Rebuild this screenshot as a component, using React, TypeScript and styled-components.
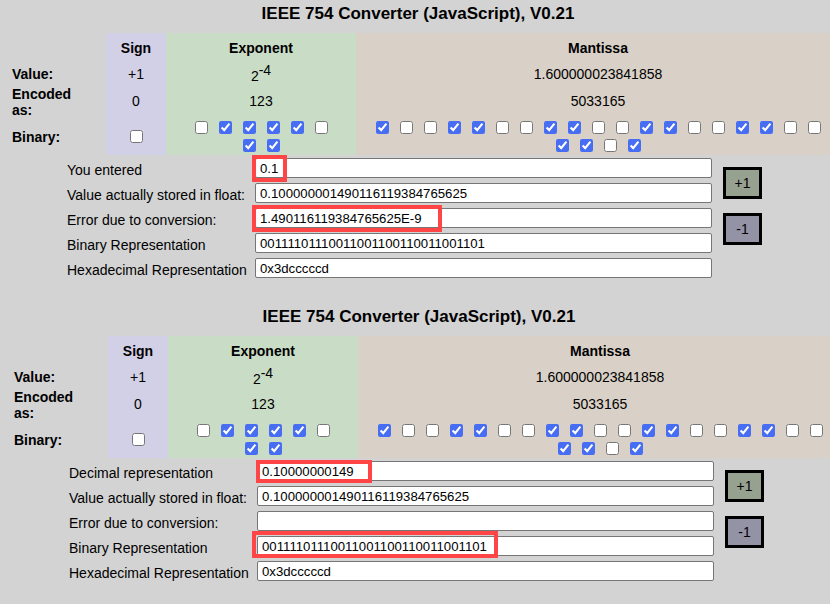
import React from "react";
import styled, { createGlobalStyle } from "styled-components";

const Global = createGlobalStyle`
  html, body { margin: 0; padding: 0; background: #d3d3d3; overflow: hidden; }
  body { font-family: "Liberation Sans", Arial, sans-serif; font-size: 14px; color: #000; }
`;

const Page = styled.div`
  width: 830px;
  height: 604px;
  overflow: hidden;
  display: flex;
  flex-direction: column;
`;

const Panel = styled.section<{ $shift: number }>`
  flex: none;
  width: 836px;
  height: 303px;
  box-sizing: border-box;
  padding-left: ${(p) => p.$shift}px;
`;

const Title = styled.h2`
  margin: 0;
  height: 33px;
  line-height: 27px;
  text-align: center;
  font-size: 17px;
  font-weight: bold;
`;

const BitTable = styled.div`
  display: grid;
  grid-template-columns: 94px 60px 190px 484px;
  grid-template-rows: 29px 23px 32px 38px;
  margin-left: 12px;
`;

const tones: Record<string, string> = {
  none: "transparent",
  sign: "#d2d0e6",
  exp: "#c9dcc6",
  man: "#d9d1c7",
};

const Cell = styled.div<{ $tone: string; $bold?: boolean }>`
  display: flex;
  align-items: center;
  justify-content: center;
  text-align: center;
  background: ${(p) => tones[p.$tone]};
  font-weight: ${(p) => (p.$bold ? "bold" : "normal")};
`;

const RowLabel = styled.div`
  display: flex;
  align-items: center;
  padding-right: 20px;
  padding-top: 1px;
  font-weight: bold;
  line-height: 16px;
`;

const Sup = styled.sup`
  font-size: 14px;
  vertical-align: 6px;
  line-height: 0;
`;

const Base = styled.span`
  display: inline-block;
  padding-top: 4px;
`;

const BitGroup = styled.div<{ $max: number }>`
  display: flex;
  flex-wrap: wrap;
  justify-content: center;
  column-gap: 11px;
  row-gap: 5px;
  max-width: ${(p) => p.$max}px;
`;

const Bit = styled.input.attrs({ type: "checkbox", readOnly: true })`
  margin: 0;
  width: 13px;
  height: 13px;
  accent-color: #476ef2;
`;

const Form = styled.div`
  display: flex;
  margin-top: 3px;
  padding-left: 67px;
`;

const Fields = styled.div`
  display: grid;
  grid-template-columns: 188px 457px;
  grid-auto-rows: 20px;
  row-gap: 5px;
`;

const FieldLabel = styled.label`
  align-self: center;
  padding-top: 3px;
  white-space: nowrap;
`;

const InputWrap = styled.div`
  position: relative;
`;

const TextInput = styled.input.attrs({ type: "text", readOnly: true })`
  display: block;
  box-sizing: border-box;
  width: 457px;
  height: 20px;
  margin: 0;
  padding: 1px 4px 0;
  border: 1px solid #767676;
  border-radius: 2px;
  background: #fff;
  font-family: "Liberation Sans", Arial, sans-serif;
  font-size: 13.2px;
  color: #000;
  outline: none;
`;

const Mark = styled.span<{ $l: number; $t: number; $w: number; $h: number }>`
  position: absolute;
  left: ${(p) => p.$l}px;
  top: ${(p) => p.$t}px;
  width: ${(p) => p.$w}px;
  height: ${(p) => p.$h}px;
  box-sizing: border-box;
  border: 4px solid #ff4545;
  pointer-events: none;
`;

const Buttons = styled.div`
  display: flex;
  flex-direction: column;
  gap: 14px;
  margin-left: 11px;
  padding-top: 9px;
`;

const StepButton = styled.button<{ $bg: string }>`
  box-sizing: border-box;
  width: 39px;
  height: 32px;
  padding: 0;
  border: 3px solid #000;
  border-radius: 0;
  background: ${(p) => p.$bg};
  font-family: "Liberation Sans", Arial, sans-serif;
  font-size: 14px;
  color: #000;
`;

type MarkBox = { l: number; t: number; w: number; h: number };
type Row = { label: string; value: string; mark?: MarkBox };

const EXP_BITS = "01111011";
const MAN_BITS = "10011001100110011001101";

const Bits = ({ bits, max }: { bits: string; max: number }) => (
  <BitGroup $max={max}>
    {bits.split("").map((b, i) => (
      <Bit key={i} checked={b === "1"} />
    ))}
  </BitGroup>
);

const Converter = ({ shift, rows }: { shift: number; rows: Row[] }) => (
  <Panel $shift={shift}>
    <Title>IEEE 754 Converter (JavaScript), V0.21</Title>
    <BitTable>
      <Cell $tone="none" />
      <Cell $tone="sign" $bold>Sign</Cell>
      <Cell $tone="exp" $bold>Exponent</Cell>
      <Cell $tone="man" $bold>Mantissa</Cell>

      <RowLabel>Value:</RowLabel>
      <Cell $tone="sign">+1</Cell>
      <Cell $tone="exp">
        <Base>
          2<Sup>-4</Sup>
        </Base>
      </Cell>
      <Cell $tone="man">1.600000023841858</Cell>

      <RowLabel>Encoded as:</RowLabel>
      <Cell $tone="sign">0</Cell>
      <Cell $tone="exp">123</Cell>
      <Cell $tone="man">5033165</Cell>

      <RowLabel>Binary:</RowLabel>
      <Cell $tone="sign">
        <Bit checked={false} />
      </Cell>
      <Cell $tone="exp">
        <Bits bits={EXP_BITS} max={140} />
      </Cell>
      <Cell $tone="man">
        <Bits bits={MAN_BITS} max={450} />
      </Cell>
    </BitTable>
    <Form>
      <Fields>
        {rows.map((r) => (
          <React.Fragment key={r.label}>
            <FieldLabel>{r.label}</FieldLabel>
            <InputWrap>
              <TextInput value={r.value} />
              {r.mark && <Mark $l={r.mark.l} $t={r.mark.t} $w={r.mark.w} $h={r.mark.h} />}
            </InputWrap>
          </React.Fragment>
        ))}
      </Fields>
      <Buttons>
        <StepButton $bg="#97a190">+1</StepButton>
        <StepButton $bg="#9493a6">-1</StepButton>
      </Buttons>
    </Form>
  </Panel>
);

const STORED = "0.100000001490116119384765625";
const BINARY = "00111101110011001100110011001101";
const HEX = "0x3dcccccd";

const topRows: Row[] = [
  { label: "You entered", value: "0.1", mark: { l: -3, t: -3, w: 35, h: 27 } },
  { label: "Value actually stored in float:", value: STORED },
  { label: "Error due to conversion:", value: "1.490116119384765625E-9", mark: { l: -3, t: -3, w: 190, h: 27 } },
  { label: "Binary Representation", value: BINARY },
  { label: "Hexadecimal Representation", value: HEX },
];

const bottomRows: Row[] = [
  { label: "Decimal representation", value: "0.10000000149", mark: { l: -1, t: -1, w: 116, h: 23 } },
  { label: "Value actually stored in float:", value: STORED },
  { label: "Error due to conversion:", value: "" },
  { label: "Binary Representation", value: BINARY, mark: { l: -5, t: -5, w: 246, h: 27 } },
  { label: "Hexadecimal Representation", value: HEX },
];

export default function App() {
  return (
    <Page>
      <Global />
      <Converter shift={0} rows={topRows} />
      <Converter shift={2} rows={bottomRows} />
    </Page>
  );
}
